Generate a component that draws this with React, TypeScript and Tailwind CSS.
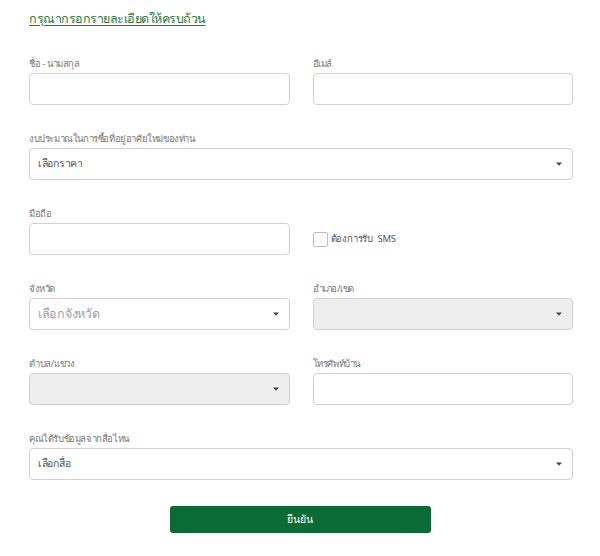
import React from "react";

const Caret = () => (
  <svg width="6" height="4" viewBox="0 0 6 4" className="shrink-0">
    <path d="M0 0.5 L6 0.5 L3 3.8 Z" fill="#444" />
  </svg>
);

const Label = ({ children }: { children: React.ReactNode }) => (
  <div className="h-[16px] mb-[1px] text-[9.5px] tracking-[-0.4px] leading-[16px] text-[#777]">
    {children}
  </div>
);

const Input = () => (
  <div className="h-[32px] rounded-[4px] border border-[#cfcfcf] bg-white" />
);

const Select = ({
  text,
  disabled,
  light,
}: {
  text?: string;
  disabled?: boolean;
  light?: boolean;
}) => (
  <div
    className={`h-[32px] rounded-[4px] border border-[#cfcfcf] flex items-center justify-between pl-[8px] pr-[10px] ${
      disabled ? "bg-[#eeeeee]" : "bg-white"
    }`}
  >
    <span
      className={
        light
          ? "text-[12.5px] tracking-[-0.3px] text-[#a0a0a0]"
          : "text-[10.5px] tracking-[-0.3px] text-[#555]"
      }
    >
      {text}
    </span>
    <Caret />
  </div>
);

export default function App() {
  return (
    <div
      className="w-[600px] h-[556px] bg-white pl-[29px] pr-[27px] pt-[9px]"
      style={{ fontFamily: '"Noto Sans", "Open Sans", sans-serif' }}
    >
      <div className="h-[20px] text-[12.5px] tracking-[-0.5px] leading-[20px] text-[#1f7a45] underline underline-offset-[2px]">
        กรุณากรอกรายละเอียดให้ครบถ้วน
      </div>
      <div className="mt-[27px] flex flex-col gap-[26px]">
        <div className="grid grid-cols-2 gap-x-[23px]">
          <div>
            <Label>ชื่อ - นามสกุล</Label>
            <Input />
          </div>
          <div>
            <Label>อีเมล์</Label>
            <Input />
          </div>
        </div>
        <div>
          <Label>งบประมาณในการซื้อที่อยู่อาศัยใหม่ของท่าน</Label>
          <Select text="เลือกราคา" />
        </div>
        <div className="grid grid-cols-2 gap-x-[23px]">
          <div>
            <Label>มือถือ</Label>
            <Input />
          </div>
          <div className="flex items-end">
            <div className="h-[32px] flex items-center gap-[3px]">
              <div className="w-[15px] h-[15px] rounded-[2px] border border-[#bdbdbd] bg-white" />
              <span className="text-[9.5px] tracking-[-0.2px] text-[#555]">ต้องการรับ&nbsp; SMS</span>
            </div>
          </div>
        </div>
        <div className="grid grid-cols-2 gap-x-[23px]">
          <div>
            <Label>จังหวัด</Label>
            <Select text="เลือกจังหวัด" light />
          </div>
          <div>
            <Label>อำเภอ/เขต</Label>
            <Select disabled />
          </div>
        </div>
        <div className="grid grid-cols-2 gap-x-[23px]">
          <div>
            <Label>ตำบล/แขวง</Label>
            <Select disabled />
          </div>
          <div>
            <Label>โทรศัพท์บ้าน</Label>
            <Input />
          </div>
        </div>
        <div>
          <Label>คุณได้รับข้อมูลจากสื่อไหน</Label>
          <Select text="เลือกสื่อ" />
        </div>
        <div className="flex justify-center pr-[2px]">
          <button className="w-[261px] h-[27px] rounded-[3px] bg-[#0b6b37] text-white text-[10.5px]">
            ยืนยัน
          </button>
        </div>
      </div>
    </div>
  );
}
